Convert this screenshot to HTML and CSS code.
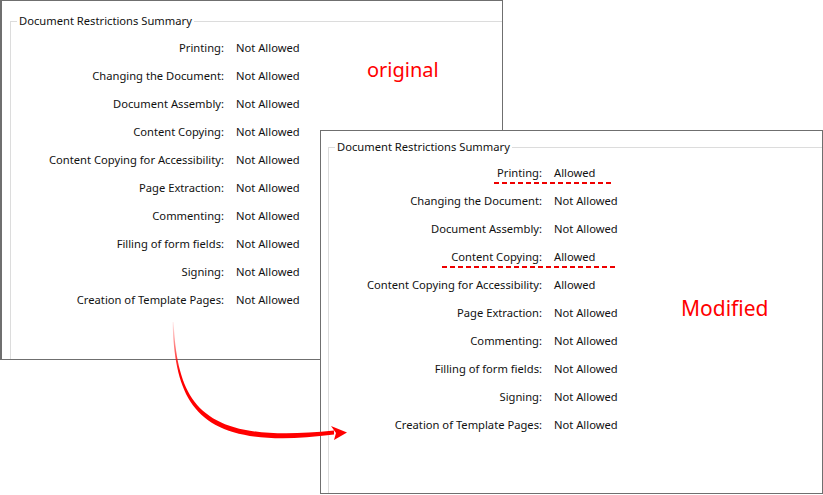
FILE: index.html
```html
<!DOCTYPE html>
<html lang="en">
<head>
<meta charset="utf-8">
<title>Document Restrictions Summary</title>
<link rel="stylesheet" href="styles.css">
</head>
<body>
<div class="stage">
  <section class="panel panel-original">
    <fieldset class="group">
      <legend class="group-title">Document Restrictions Summary</legend>
      <div class="rows">
        <span class="label">Printing:</span><span class="value">Not Allowed</span>
        <span class="label">Changing the Document:</span><span class="value">Not Allowed</span>
        <span class="label">Document Assembly:</span><span class="value">Not Allowed</span>
        <span class="label">Content Copying:</span><span class="value">Not Allowed</span>
        <span class="label">Content Copying for Accessibility:</span><span class="value">Not Allowed</span>
        <span class="label">Page Extraction:</span><span class="value">Not Allowed</span>
        <span class="label">Commenting:</span><span class="value">Not Allowed</span>
        <span class="label">Filling of form fields:</span><span class="value">Not Allowed</span>
        <span class="label">Signing:</span><span class="value">Not Allowed</span>
        <span class="label">Creation of Template Pages:</span><span class="value">Not Allowed</span>
      </div>
    </fieldset>
    <span class="tag tag-original">original</span>
  </section>

  <section class="panel panel-modified">
    <fieldset class="group">
      <legend class="group-title">Document Restrictions Summary</legend>
      <div class="rows">
        <span class="label">Printing:</span><span class="value">Allowed</span>
        <span class="label">Changing the Document:</span><span class="value">Not Allowed</span>
        <span class="label">Document Assembly:</span><span class="value">Not Allowed</span>
        <span class="label">Content Copying:</span><span class="value">Allowed</span>
        <span class="label">Content Copying for Accessibility:</span><span class="value">Allowed</span>
        <span class="label">Page Extraction:</span><span class="value">Not Allowed</span>
        <span class="label">Commenting:</span><span class="value">Not Allowed</span>
        <span class="label">Filling of form fields:</span><span class="value">Not Allowed</span>
        <span class="label">Signing:</span><span class="value">Not Allowed</span>
        <span class="label">Creation of Template Pages:</span><span class="value">Not Allowed</span>
      </div>
    </fieldset>
    <span class="tag tag-modified">Modified</span>
  </section>

  <span class="dash dash-printing"></span>
  <span class="dash dash-copying"></span>

  <svg class="arrow" width="823" height="495" viewBox="0 0 823 495" aria-hidden="true">
    <defs>
      <linearGradient id="fade" gradientUnits="userSpaceOnUse" x1="0" y1="318" x2="0" y2="372">
        <stop offset="0" stop-color="#ff0000" stop-opacity="0"/>
        <stop offset="1" stop-color="#ff0000" stop-opacity="1"/>
      </linearGradient>
    </defs>
    <path d="M172.6 322 C175 411 203 451 334 434.6 L334 430.6 C205 444 177.6 409 173.6 322 Z" fill="url(#fade)"/>
    <polygon points="331,426 347,432.6 334,440 336,433" fill="#ff0000"/>
  </svg>
</div>
</body>
</html>
```

FILE: styles.css
```css
* {
  box-sizing: border-box;
}

html, body {
  margin: 0;
  padding: 0;
  background: #ffffff;
}

.stage {
  position: relative;
  width: 823px;
  height: 495px;
  overflow: hidden;
  background: #ffffff;
  font-family: "Noto Sans", "Open Sans", "Liberation Sans", sans-serif;
  font-size: 11.2px;
  color: #111111;
}

.panel {
  position: absolute;
  width: 503px;
  background: #ffffff;
  border: 1px solid #6f6f6f;
  overflow: hidden;
}

.panel-original {
  left: 0;
  top: 0;
  height: 360px;
  border-left-width: 2px;
  padding: 12px 0 0 8px;
}

.panel-modified {
  left: 320px;
  top: 130px;
  height: 364px;
  padding: 8px 0 0 7px;
}

.group {
  margin: 0;
  padding: 0;
  min-width: 0;
  width: 560px;
  height: 600px;
  border: 1px solid #dcdcdc;
}

.group-title {
  margin-left: 6px;
  padding: 0 2px;
  height: 16px;
  line-height: 16px;
}

.rows {
  display: grid;
  grid-template-columns: 213px auto;
  grid-auto-rows: 28px;
  column-gap: 12px;
  margin-top: 5px;
  line-height: 28px;
  white-space: nowrap;
}

.panel-modified .rows {
  margin-top: 4px;
}

.label {
  text-align: right;
}

.value {
  text-align: left;
}

.tag {
  position: absolute;
  color: #ff0000;
  line-height: 1;
  white-space: nowrap;
}

.tag-original {
  left: 365px;
  top: 59px;
  font-size: 20px;
}

.tag-modified {
  left: 360px;
  top: 167px;
  font-size: 21px;
}

.dash {
  position: absolute;
  height: 2px;
  background: repeating-linear-gradient(90deg, #ee0000 0 5px, transparent 5px 8px);
}

.dash-printing {
  left: 494px;
  top: 182px;
  width: 118px;
}

.dash-copying {
  left: 442px;
  top: 266px;
  width: 174px;
}

.arrow {
  position: absolute;
  left: 0;
  top: 0;
  pointer-events: none;
}
```
